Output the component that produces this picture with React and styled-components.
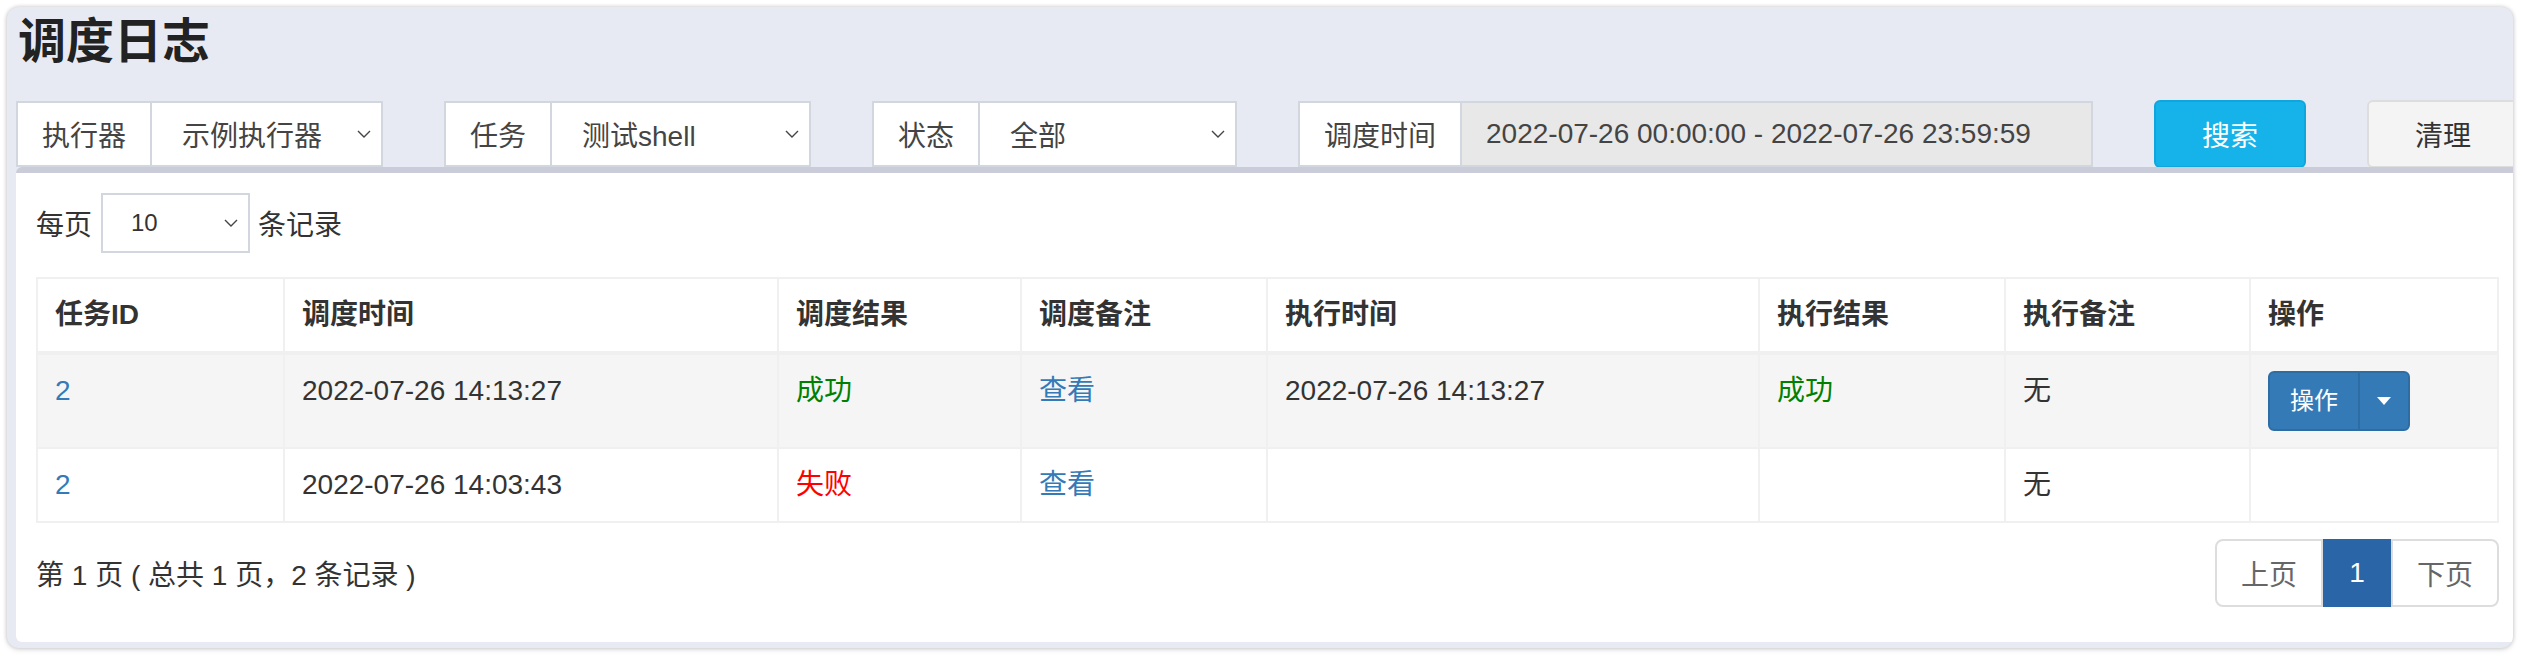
import React from 'react'
import styled, { createGlobalStyle } from 'styled-components'

const Global = createGlobalStyle`
  html, body { margin: 0; padding: 0; background: #fff; }
  body {
    font-family: 'Liberation Sans', 'Noto Sans CJK SC', sans-serif;
    font-size: 28px;
    color: #333;
  }
`

const rows = [
  { id: 2, triggerTime: '2022-07-26 14:13:27', triggerOk: true, handleTime: '2022-07-26 14:13:27', handleOk: true, withOps: true },
  { id: 2, triggerTime: '2022-07-26 14:03:43', triggerOk: false, handleTime: '', handleOk: null, withOps: false },
]

const Chevron = () => (
  <svg width="14" height="8" viewBox="0 0 14 8">
    <path d="M1 1l6 6 6-6" fill="none" stroke="#444" strokeWidth="1.4" />
  </svg>
)

const Caret = () => (
  <svg width="14" height="8" viewBox="0 0 14 8">
    <path d="M0 0h14L7 8z" fill="#fff" />
  </svg>
)

export default function App() {
  return (
    <Window>
      <Global />
      <Title>调度日志</Title>
      <Filters>
        <Group width={367}>
          <Addon>执行器</Addon>
          <Select>示例执行器<Chevron /></Select>
        </Group>
        <Group width={367}>
          <Addon>任务</Addon>
          <Select>测试shell<Chevron /></Select>
        </Group>
        <Group width={365}>
          <Addon>状态</Addon>
          <Select>全部<Chevron /></Select>
        </Group>
        <Group width={795}>
          <Addon>调度时间</Addon>
          <DateInput>2022-07-26 00:00:00 - 2022-07-26 23:59:59</DateInput>
        </Group>
        <Button kind="info">搜索</Button>
        <Button>清理</Button>
      </Filters>
      <Box>
        <Length>
          每页
          <SmallSelect>10<Chevron /></SmallSelect>
          条记录
        </Length>
        <Table>
          <colgroup>
            <col style={{ width: 247 }} />
            <col style={{ width: 494 }} />
            <col style={{ width: 243 }} />
            <col style={{ width: 246 }} />
            <col style={{ width: 492 }} />
            <col style={{ width: 246 }} />
            <col style={{ width: 245 }} />
            <col />
          </colgroup>
          <thead>
            <tr>
              <Th>任务ID</Th>
              <Th>调度时间</Th>
              <Th>调度结果</Th>
              <Th>调度备注</Th>
              <Th>执行时间</Th>
              <Th>执行结果</Th>
              <Th>执行备注</Th>
              <Th>操作</Th>
            </tr>
          </thead>
          <tbody>
            {rows.map((r, i) => (
              <Tr key={i} striped={i % 2 === 0}>
                <Td><Link>{r.id}</Link></Td>
                <Td>{r.triggerTime}</Td>
                <Td><Status ok={r.triggerOk}>{r.triggerOk ? '成功' : '失败'}</Status></Td>
                <Td><Link>查看</Link></Td>
                <Td>{r.handleTime}</Td>
                <Td>{r.handleOk !== null && <Status ok={r.handleOk}>{r.handleOk ? '成功' : '失败'}</Status>}</Td>
                <Td>无</Td>
                <Td>
                  {r.withOps && (
                    <SplitButton>
                      <SplitMain>操作</SplitMain>
                      <SplitToggle><Caret /></SplitToggle>
                    </SplitButton>
                  )}
                </Td>
              </Tr>
            ))}
          </tbody>
        </Table>
        <Footer>
          <Info>第 1 页 ( 总共 1 页，2 条记录 )</Info>
          <Pagination>
            <PageItem>上页</PageItem>
            <PageItem active>1</PageItem>
            <PageItem>下页</PageItem>
          </Pagination>
        </Footer>
      </Box>
    </Window>
  )
}

const Window = styled.div`
  margin: 7px 9px 8px 7px;
  height: 641px;
  box-sizing: border-box;
  padding: 8px 0 6px 9px;
  background: #e7eaf3;
  border-radius: 12px;
  box-shadow: 0 0 4px rgba(0, 0, 0, 0.22), 0 2px 6px rgba(0, 0, 0, 0.08);
  overflow: hidden;
  display: flex;
  flex-direction: column;
`
const Title = styled.h1`
  margin: 0 0 32px 2px;
  font-size: 48px;
  line-height: 53px;
  font-weight: bold;
  color: #222;
`
const Filters = styled.div`
  display: flex;
  gap: 61px;
  align-items: flex-start;
  height: 67px;
`
const Group = styled.div`
  flex: 0 0 ${p => p.width}px;
  display: flex;
  height: 66px;
  margin-top: 1px;
  box-sizing: border-box;
`
const Addon = styled.div`
  display: flex;
  align-items: center;
  padding: 0 24px;
  background: #fff;
  color: #444;
  border: 2px solid #d2d6de;
  border-right: 0;
  white-space: nowrap;
`
const Select = styled.div`
  flex: 1;
  display: flex;
  align-items: center;
  justify-content: space-between;
  padding: 0 10px 0 30px;
  background: #fff;
  color: #444;
  border: 2px solid #d2d6de;
  white-space: nowrap;
`
const DateInput = styled.div`
  flex: 1;
  display: flex;
  align-items: center;
  padding: 0 24px;
  background: #e8e8e8;
  color: #444;
  border: 2px solid #d2d6de;
  white-space: nowrap;
`
const Button = styled.div`
  flex: 0 0 152px;
  height: 68px;
  box-sizing: border-box;
  display: flex;
  align-items: center;
  justify-content: center;
  border-radius: 6px;
  border: 2px solid ${p => (p.kind === 'info' ? '#0ea6dc' : '#ddd')};
  background: ${p => (p.kind === 'info' ? '#16b3ea' : '#f4f4f4')};
  color: ${p => (p.kind === 'info' ? '#fff' : '#333')};
`
const Box = styled.div`
  flex: 1;
  background: #fff;
  border-top: 6px solid #cacdd9;
  border-radius: 6px 0 0 6px;
  padding: 20px 14px 0 20px;
  display: flex;
  flex-direction: column;
`
const Length = styled.div`
  display: flex;
  align-items: center;
  height: 60px;
  margin-bottom: 24px;
  color: #333;
`
const SmallSelect = styled.div`
  width: 149px;
  height: 60px;
  box-sizing: border-box;
  margin: 0 8px 0 9px;
  border: 2px solid #d2d6de;
  display: flex;
  align-items: center;
  justify-content: space-between;
  padding: 0 10px 0 28px;
  font-size: 24px;
  color: #333;
`
const Table = styled.table`
  width: 100%;
  border-collapse: collapse;
  table-layout: fixed;
  border: 2px solid #f0f0f0;
`
const Th = styled.th`
  text-align: left;
  font-weight: bold;
  color: #333;
  padding: 16px 17px;
  line-height: 40px;
  border: 2px solid #f0f0f0;
  border-bottom-width: 4px;
`
const Tr = styled.tr`
  background: ${p => (p.striped ? '#f5f5f5' : '#fff')};
`
const Td = styled.td`
  padding: 16px 17px;
  line-height: 40px;
  vertical-align: top;
  border: 2px solid #f0f0f0;
  color: #333;
  white-space: nowrap;
`
const Link = styled.span`
  color: #337ab7;
`
const Status = styled.span`
  color: ${p => (p.ok ? '#008000' : '#ff0000')};
`
const SplitButton = styled.div`
  display: inline-flex;
  height: 60px;
  border-radius: 6px;
  overflow: hidden;
  background: #337ab7;
  border: 2px solid #2e6da4;
  box-sizing: border-box;
`
const SplitMain = styled.div`
  width: 88px;
  display: flex;
  align-items: center;
  justify-content: center;
  color: #fff;
  font-size: 24px;
  border-right: 2px solid #2e6da4;
`
const SplitToggle = styled.div`
  width: 48px;
  display: flex;
  align-items: center;
  justify-content: center;
`
const Footer = styled.div`
  display: flex;
  justify-content: space-between;
  align-items: center;
  margin-top: 16px;
`
const Info = styled.div`
  color: #333;
`
const Pagination = styled.div`
  display: flex;
  height: 68px;
  border: 2px solid #ddd;
  border-radius: 8px;
  box-sizing: border-box;
`
const PageItem = styled.div`
  display: flex;
  align-items: center;
  justify-content: center;
  padding: 0 ${p => (p.active ? 24 : 24)}px;
  min-width: ${p => (p.active ? 20 : 0)}px;
  background: ${p => (p.active ? '#2a65a8' : 'transparent')};
  color: ${p => (p.active ? '#fff' : '#666')};
  margin: ${p => (p.active ? '-2px 0' : '0')};
  & + & { border-left: 2px solid #ddd; }
`
